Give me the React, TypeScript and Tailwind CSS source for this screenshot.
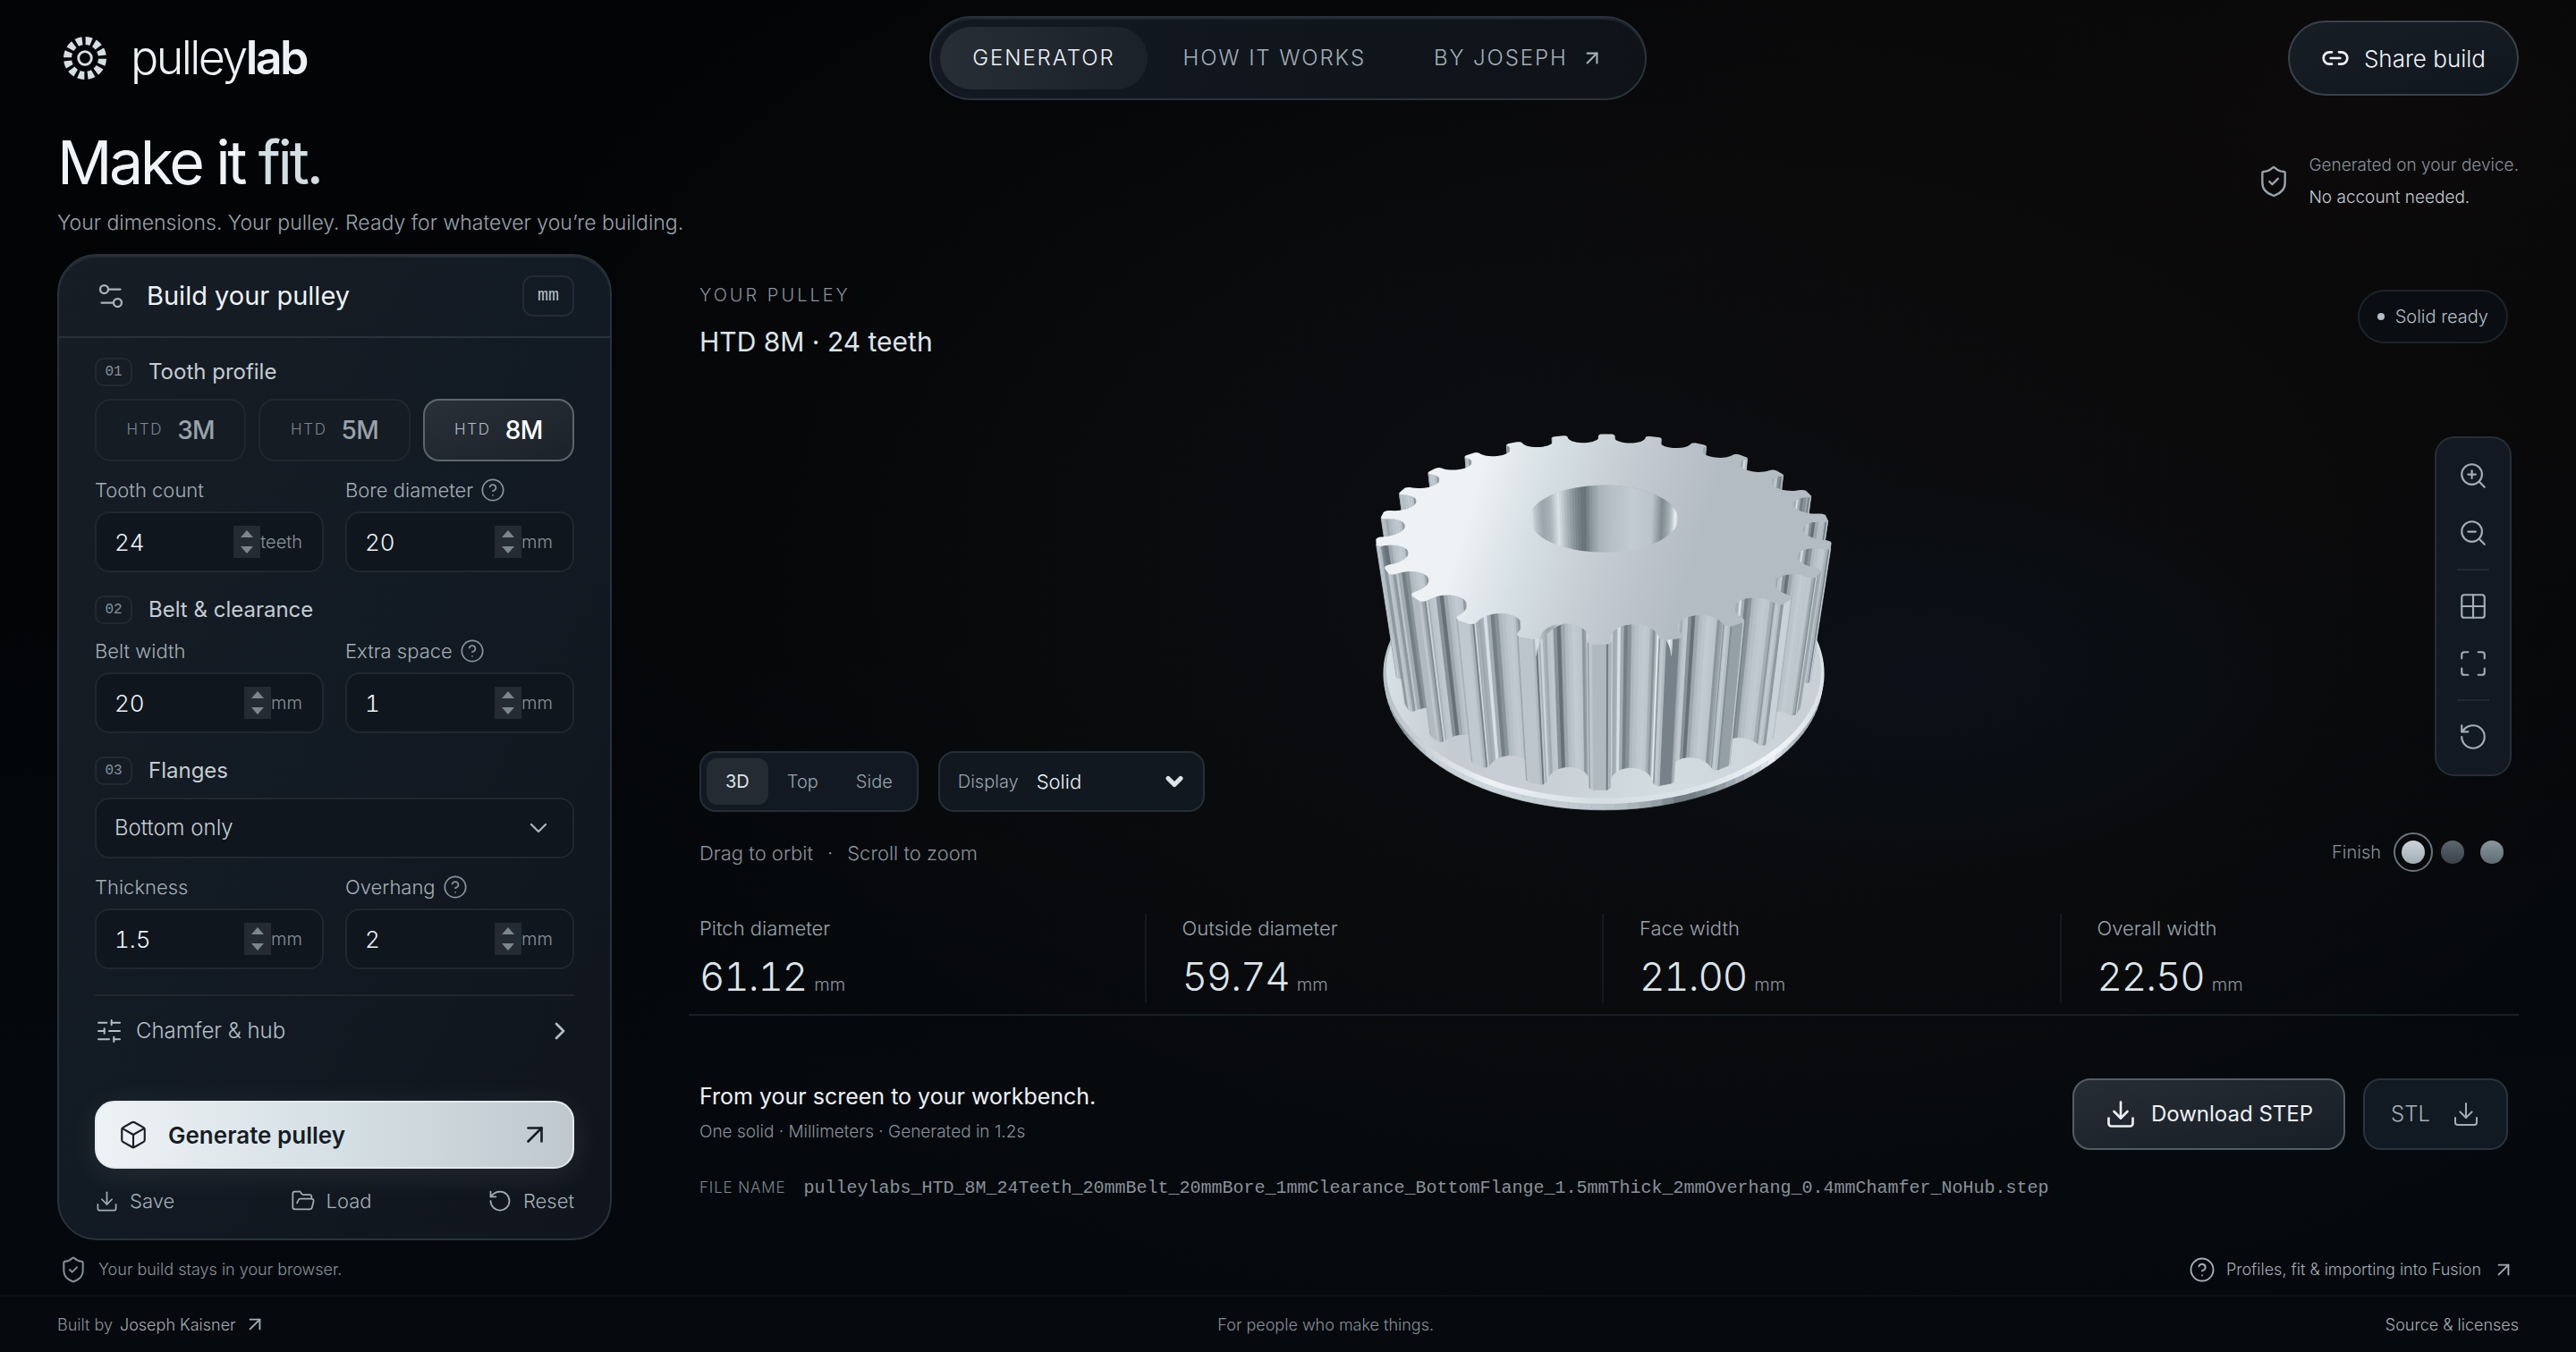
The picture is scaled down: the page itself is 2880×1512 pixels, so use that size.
import { useId, useState } from "react";
import type { ReactNode } from "react";
import {
  ArrowUpRight,
  Box,
  ChevronDown,
  ChevronRight,
  CircleHelp,
  Download,
  FolderOpen,
  Grid2x2,
  Link2,
  Maximize,
  RotateCcw,
  Settings2,
  ShieldCheck,
  SlidersHorizontal,
  ZoomIn,
  ZoomOut,
} from "lucide-react";

const FILE_NAME =
  "pulleylabs_HTD_8M_24Teeth_20mmBelt_20mmBore_1mmClearance_BottomFlange_1.5mmThick_2mmOverhang_0.4mmChamfer_NoHub.step";

const TEETH = 24;
const OUTSIDE_R = 29.87;
const FLANGE_R = 31.87;
const BORE_R = 10;
const TOP = 11.25;
const FLANGE_TOP = -9.75;
const BOTTOM = -11.25;

type Vec2 = [number, number];

// Camera looking down on the part
const CAM = { dist: 124, focal: 978, sin: 0.52, cos: 0.854, cx: 300, cy: 264 };

function project(x: number, y: number, z: number): Vec2 {
  const depth = CAM.dist - z * CAM.sin + y * CAM.cos;
  return [
    CAM.cx + (CAM.focal * x) / depth,
    CAM.cy - (CAM.focal * (z * CAM.cos + y * CAM.sin)) / depth,
  ];
}

// Brightness of a vertical wall by the heading of its normal, in degrees
const WALL: Vec2[] = [
  [-180, 0.8], [-90, 0.84], [-80, 1], [-68, 0.66], [-56, 0.42], [-44, 0.76], [-25, 0.8],
  [-8, 0.74], [3, 0.68], [11, 0.5], [17, 0.24], [24, 0.4], [32, 0.64], [41, 0.92],
  [50, 0.66], [60, 0.58], [71, 0.74], [82, 0.92], [90, 0.88], [180, 0.8],
];

const RAMP: [number, number, number, number][] = [
  [0, 60, 70, 79],
  [0.25, 100, 111, 119],
  [0.5, 139, 150, 157],
  [0.75, 186, 194, 201],
  [0.9, 213, 223, 228],
  [1, 240, 244, 247],
];

function wallShade(heading: number) {
  for (let i = 1; i < WALL.length; i++) {
    if (heading <= WALL[i][0]) {
      const [a, va] = WALL[i - 1];
      const [b, vb] = WALL[i];
      return va + ((vb - va) * (heading - a)) / (b - a);
    }
  }
  return 0.8;
}

function metal(value: number) {
  const v = Math.min(1, Math.max(0, value));
  for (let i = 1; i < RAMP.length; i++) {
    if (v <= RAMP[i][0]) {
      const lo = RAMP[i - 1];
      const hi = RAMP[i];
      const t = (v - lo[0]) / (hi[0] - lo[0]);
      const c = [1, 2, 3].map((k) => Math.round(lo[k] + (hi[k] - lo[k]) * t));
      return `rgb(${c.join(",")})`;
    }
  }
  return "rgb(240,244,247)";
}

function circle(r: number, n = 144): Vec2[] {
  return Array.from({ length: n }, (_, i) => {
    const a = (i / n) * Math.PI * 2;
    return [r * Math.cos(a), r * Math.sin(a)] as Vec2;
  });
}

// Tooth outline, counter-clockwise: rounded groove, shoulder fillets, land
function toothOutline(): Vec2[] {
  const pts: Vec2[] = [];
  const grooveR = 2.55;
  const fillet = 0.65;
  const center = OUTSIDE_R - 0.9;
  const step = (Math.PI * 2) / TEETH;
  const start = -Math.PI / 2 + step / 2 - 0.016;
  for (let i = 0; i < TEETH; i++) {
    const a = start + i * step;
    const local: Vec2[] = [];
    for (let k = 0; k <= 5; k++) {
      const t = (k / 5) * (Math.PI / 2);
      local.push([-(grooveR + fillet) + fillet * Math.sin(t), fillet * Math.cos(t) + 0.25]);
    }
    for (let k = 0; k <= 18; k++) {
      const t = Math.PI + (k / 18) * Math.PI;
      local.push([grooveR * Math.cos(t), grooveR * Math.sin(t)]);
    }
    for (let k = 0; k <= 5; k++) {
      const t = (k / 5) * (Math.PI / 2);
      local.push([grooveR + fillet - fillet * Math.cos(t), fillet * Math.sin(t) + 0.25]);
    }
    for (const [u, v] of local) {
      const r = center + v;
      pts.push([r * Math.cos(a) - u * Math.sin(a), r * Math.sin(a) + u * Math.cos(a)]);
    }
  }
  return pts;
}

const toPoints = (pts: Vec2[]) => pts.map((p) => `${p[0].toFixed(1)},${p[1].toFixed(1)}`).join(" ");
const toPath = (pts: Vec2[]) => "M" + pts.map((p) => `${p[0].toFixed(1)} ${p[1].toFixed(1)}`).join("L") + "Z";

// Extruded wall between two heights; inner walls show the side facing the axis
function walls(outline: Vec2[], zTop: number, zBottom: number, inner = false, lift = 0) {
  const quads: { points: string; fill: string; far: number }[] = [];
  outline.forEach((p, i) => {
    const q = outline[(i + 1) % outline.length];
    const quad = [project(p[0], p[1], zTop), project(q[0], q[1], zTop), project(q[0], q[1], zBottom), project(p[0], p[1], zBottom)];
    let area = 0;
    quad.forEach((c, k) => {
      const d = quad[(k + 1) % 4];
      area += c[0] * d[1] - d[0] * c[1];
    });
    if (inner ? area >= 0 : area <= 0) return;
    const sign = inner ? -1 : 1;
    const nx = (q[1] - p[1]) * sign;
    const ny = -(q[0] - p[0]) * sign;
    const heading = (Math.atan2(nx, -ny) * 180) / Math.PI;
    quads.push({ points: toPoints(quad), fill: metal(wallShade(heading) + lift), far: p[1] + q[1] });
  });
  return quads.sort((a, b) => b.far - a.far);
}

const outline = toothOutline();
const flatten = (pts: Vec2[], z: number) => pts.map(([x, y]) => project(x, y, z));

const toothWalls = walls(outline, TOP, FLANGE_TOP);
const boreWalls = walls(circle(BORE_R), TOP, BOTTOM, true);
const rimWalls = walls(circle(FLANGE_R - 0.1), FLANGE_TOP - 0.4, BOTTOM, false, 0.06);
const topFace = toPath(flatten(outline, TOP)) + toPath(flatten(circle(BORE_R), TOP));

function PulleyModel() {
  return (
    <svg viewBox="0 0 600 520" className="h-[520px] w-[600px]" role="img" aria-label="Pulley preview">
      <defs>
        <linearGradient id="face" gradientUnits="userSpaceOnUse" x1="120" y1="160" x2="398" y2="246">
          <stop offset="0" stopColor="#eef2f5" />
          <stop offset="0.12" stopColor="#edf1f4" />
          <stop offset="0.36" stopColor="#d6e0e4" />
          <stop offset="0.68" stopColor="#c3cad1" />
          <stop offset="1" stopColor="#b3bbc3" />
        </linearGradient>
        <linearGradient id="flange" gradientUnits="userSpaceOnUse" x1="50" y1="0" x2="540" y2="0">
          <stop offset="0" stopColor="#d9e2e6" />
          <stop offset="0.16" stopColor="#c4cbd2" />
          <stop offset="0.4" stopColor="#c9d1d7" />
          <stop offset="0.65" stopColor="#d3dde1" />
          <stop offset="1" stopColor="#c8d0d6" />
        </linearGradient>
        <linearGradient id="edge" gradientUnits="userSpaceOnUse" x1="50" y1="0" x2="540" y2="0">
          <stop offset="0" stopColor="#b4bec5" />
          <stop offset="0.25" stopColor="#eef2f5" />
          <stop offset="0.5" stopColor="#d5dfe3" />
          <stop offset="0.75" stopColor="#dbe4e8" />
          <stop offset="0.9" stopColor="#f2f5f7" />
          <stop offset="1" stopColor="#dbe3e7" />
        </linearGradient>
      </defs>
      {rimWalls.map((q, i) => (
        <polygon key={i} points={q.points} fill={q.fill} stroke={q.fill} strokeWidth="0.7" />
      ))}
      <polygon points={toPoints(flatten(circle(FLANGE_R), FLANGE_TOP - 0.4))} fill="url(#edge)" />
      <polygon points={toPoints(flatten(circle(FLANGE_R - 0.5), FLANGE_TOP))} fill="url(#flange)" />
      {toothWalls.map((q, i) => (
        <polygon key={i} points={q.points} fill={q.fill} stroke={q.fill} strokeWidth="0.7" />
      ))}
      <polygon points={toPoints(flatten(circle(BORE_R), TOP))} fill="#b9c1c8" />
      {boreWalls.map((q, i) => (
        <polygon key={i} points={q.points} fill={q.fill} stroke={q.fill} strokeWidth="0.7" />
      ))}
      <path d={topFace} fill="url(#face)" fillRule="evenodd" />
    </svg>
  );
}

function LogoMark() {
  const point = (r: number, deg: number) => {
    const a = (deg * Math.PI) / 180;
    return `${(25 + r * Math.sin(a)).toFixed(2)} ${(25 - r * Math.cos(a)).toFixed(2)}`;
  };
  return (
    <svg viewBox="0 0 50 50" className="size-[50px]" aria-hidden="true">
      {Array.from({ length: 12 }, (_, i) => {
        const a = 11.5 + i * 30;
        return (
          <path
            key={i}
            fill="#d5dfe3"
            d={`M${point(24, a - 10)}A24 24 0 0 1 ${point(24, a + 10)}L${point(15, a + 9)}A15 15 0 0 0 ${point(15, a - 9)}Z`}
          />
        );
      })}
      <circle cx="25" cy="25" r="7.3" fill="none" stroke="#d5dfe3" strokeWidth="2.8" />
    </svg>
  );
}

function NumberField({ label, unit, initial, help }: { label: string; unit: string; initial: string; help?: boolean }) {
  const id = useId();
  const [value, setValue] = useState(initial);
  const bump = (by: number) => setValue(String(Number(value) + by));

  return (
    <div className="flex flex-col gap-2">
      <div className="flex h-8 items-center gap-2">
        <label htmlFor={id} className="text-[22px] leading-8 font-light text-[#a3aeb5]">{label}</label>
        {help && (
          <button type="button" aria-label={`About ${label}`} className="text-[#87929a]">
            <CircleHelp size={28} strokeWidth={1.5} />
          </button>
        )}
      </div>
      <div className="flex h-[68px] items-center rounded-2xl border-2 border-[#20272f] bg-[#0f161d] pl-5 pr-[22px]">
        <input
          id={id}
          inputMode="decimal"
          value={value}
          onChange={(e) => setValue(e.target.value)}
          className="min-w-0 flex-1 bg-transparent text-[26px] font-light tabular-nums text-[#eef2f5] outline-none"
        />
        <div className="flex h-9 w-[30px] flex-col bg-[#242b33] text-[#7b868d]">
          <button type="button" aria-label={`Increase ${label}`} onClick={() => bump(1)} className="flex flex-1 items-center justify-center">
            <svg viewBox="0 0 14 8" className="h-2 w-3.5"><path d="M7 0l7 8H0z" fill="currentColor" /></svg>
          </button>
          <button type="button" aria-label={`Decrease ${label}`} onClick={() => bump(-1)} className="flex flex-1 items-center justify-center">
            <svg viewBox="0 0 14 8" className="h-2 w-3.5"><path d="M7 8l7-8H0z" fill="currentColor" /></svg>
          </button>
        </div>
        <span className="text-[20px] font-light text-[#87929a]">{unit}</span>
      </div>
    </div>
  );
}

function SectionTitle({ index, children }: { index: string; children: ReactNode }) {
  return (
    <div className="flex h-8 items-center gap-[18px]">
      <span className="flex h-8 w-[42px] items-center justify-center rounded-[10px] border-2 border-[#222931] font-['Liberation_Mono',monospace] text-[16px] text-[#87929a]">
        {index}
      </span>
      <h3 className="text-[24px] leading-8 text-[#c4ccd2]">{children}</h3>
    </div>
  );
}

function BuildPanel() {
  const [profile, setProfile] = useState("8M");

  return (
    <section className="flex flex-col rounded-[44px] border-2 border-[#29323a] bg-linear-to-br from-[#161d25] via-[#121a23] to-[#10151d] shadow-[inset_0_2px_0_#232c34]">
      <div className="flex h-[92px] items-center border-b-2 border-[#29313a] px-10">
        <Settings2 size={36} strokeWidth={1.5} className="text-[#a9b4bb]" />
        <h2 className="ml-[22px] flex-1 text-[29px] text-[#eef2f5]">Build your pulley</h2>
        <span className="flex h-[46px] w-[58px] items-center justify-center rounded-xl border-2 border-[#242b33] font-['Liberation_Mono',monospace] text-[20px] text-[#b4bec5]">
          mm
        </span>
      </div>

      <div className="flex flex-1 flex-col px-10 pt-[22px]">
        <SectionTitle index="01">Tooth profile</SectionTitle>
        <div className="mt-3.5 grid grid-cols-3 gap-3.5">
          {["3M", "5M", "8M"].map((size) => (
            <button
              key={size}
              type="button"
              aria-pressed={profile === size}
              onClick={() => setProfile(size)}
              className={`flex h-[70px] items-center justify-center gap-4 rounded-[18px] border-2 ${
                profile === size
                  ? "border-[#5b666e] bg-linear-to-br from-[#293038] to-[#1b222a] text-white"
                  : "border-[#20272f] bg-[#151c24] text-[#98a3aa]"
              }`}
            >
              <span className={`text-[17px] tracking-widest font-light ${profile === size ? "text-[#b4bec5]" : "text-[#7b868d]"}`}>HTD</span>
              <span className="text-[28px] font-medium tracking-tight">{size}</span>
            </button>
          ))}
        </div>
        <div className="mt-4 grid grid-cols-2 gap-6">
          <NumberField label="Tooth count" unit="teeth" initial="24" />
          <NumberField label="Bore diameter" unit="mm" initial="20" help />
        </div>

        <div className="mt-[26px]">
          <SectionTitle index="02">Belt &amp; clearance</SectionTitle>
        </div>
        <div className="mt-3.5 grid grid-cols-2 gap-6">
          <NumberField label="Belt width" unit="mm" initial="20" />
          <NumberField label="Extra space" unit="mm" initial="1" help />
        </div>

        <div className="mt-[26px]">
          <SectionTitle index="03">Flanges</SectionTitle>
        </div>
        <div className="relative mt-3.5">
          <select
            aria-label="Flanges"
            className="h-[68px] w-full appearance-none rounded-2xl border-2 border-[#20272f] bg-[#0f161d] px-5 text-[24px] font-light text-[#c4ccd2]"
          >
            <option>Bottom only</option>
            <option>Both sides</option>
            <option>None</option>
          </select>
          <ChevronDown size={32} strokeWidth={1.75} className="pointer-events-none absolute right-6 top-[18px] text-[#a9b4bb]" />
        </div>
        <div className="mt-4 grid grid-cols-2 gap-6">
          <NumberField label="Thickness" unit="mm" initial="1.5" />
          <NumberField label="Overhang" unit="mm" initial="2" help />
        </div>

        <button type="button" className="mt-7 flex h-20 items-center border-t-2 border-[#20272f] text-[24px] font-light text-[#b4bec5]">
          <SlidersHorizontal size={32} strokeWidth={1.5} />
          <span className="ml-3.5 flex-1 text-left">Chamfer &amp; hub</span>
          <ChevronRight size={32} strokeWidth={2} />
        </button>

        <button
          type="button"
          className="mt-auto flex h-[76px] items-center rounded-[22px] border-2 border-[#e3eaee] bg-linear-to-r from-[#eef2f5] via-[#d5e0e4] to-[#c0c8cf] px-6 text-[#161d25] shadow-[0_6px_32px_rgba(213,224,228,0.1)]"
        >
          <Box size={34} strokeWidth={1.5} />
          <span className="ml-[22px] flex-1 text-left text-[26px] font-semibold">Generate pulley</span>
          <ArrowUpRight size={36} strokeWidth={1.75} />
        </button>

        <div className="mb-[26px] mt-5 flex h-8 items-center justify-between text-[22px] font-light text-[#a3aeb5]">
          <button type="button" className="flex items-center gap-3"><Download size={27} strokeWidth={1.5} />Save</button>
          <button type="button" className="flex items-center gap-3"><FolderOpen size={28} strokeWidth={1.5} />Load</button>
          <button type="button" className="flex items-center gap-3"><RotateCcw size={28} strokeWidth={1.5} />Reset</button>
        </div>
      </div>
    </section>
  );
}

function Viewer() {
  const [view, setView] = useState("3D");
  const [finish, setFinish] = useState("Silver");

  const tools = [
    [
      { label: "Zoom in", icon: <ZoomIn size={34} strokeWidth={1.5} /> },
      { label: "Zoom out", icon: <ZoomOut size={34} strokeWidth={1.5} /> },
    ],
    [
      { label: "Toggle grid", icon: <Grid2x2 size={34} strokeWidth={1.5} /> },
      { label: "Fit to view", icon: <Maximize size={34} strokeWidth={1.5} /> },
    ],
    [{ label: "Reset view", icon: <RotateCcw size={34} strokeWidth={1.5} /> }],
  ];

  const finishes = [
    { name: "Silver", dot: "bg-linear-to-b from-[#ccd4da] to-[#a3adb4]" },
    { name: "Graphite", dot: "bg-linear-to-b from-[#5b666e] to-[#3a424a]" },
    { name: "Steel", dot: "bg-linear-to-b from-[#8b979e] to-[#5f6b72]" },
  ];

  return (
    <section className="relative flex h-[738px] flex-col justify-between pl-3 pr-2 pt-[30px] pb-12">
      {/* Canvas behind the controls */}
      <div className="absolute inset-0 flex items-center justify-center">
        <PulleyModel />
      </div>

      <div className="relative flex items-start justify-between">
        <div>
          <p className="text-[20px] leading-8 tracking-[0.15em] font-light text-[#87929a]">YOUR PULLEY</p>
          <h2 className="mt-4 text-[30px] leading-10 text-[#dde5e9]">HTD 8M · 24 teeth</h2>
        </div>
        <p className="mr-1 mt-2.5 flex h-[60px] items-center gap-3 rounded-full border-2 border-[#1c242b] bg-[#0a0e12] px-5 text-[20px] font-light text-[#b4bec5]">
          <span className="size-2 rounded-full bg-[#b4bec5]" />
          Solid ready
        </p>
      </div>

      <div className="relative flex items-end justify-between">
        <div className="mb-1">
          <div className="flex gap-[22px]">
            <div className="flex h-[68px] items-center rounded-[18px] border-2 border-[#262e36] bg-[#121922] p-1.5">
              {["3D", "Top", "Side"].map((name) => (
                <button
                  key={name}
                  type="button"
                  aria-pressed={view === name}
                  onClick={() => setView(name)}
                  className={`h-[52px] rounded-xl px-[21px] text-[20px] ${
                    view === name ? "bg-[#242b33] text-[#dde5e9]" : "font-light text-[#98a3aa]"
                  }`}
                >
                  {name}
                </button>
              ))}
            </div>
            <div className="relative flex h-[68px] w-[298px] items-center rounded-[18px] border-2 border-[#262e36] bg-[#111820] pl-5">
              <label htmlFor="display" className="text-[20px] font-light text-[#98a3aa]">Display</label>
              <select id="display" className="ml-5 h-full flex-1 appearance-none bg-transparent text-[22px] font-light text-[#eef2f5]">
                <option>Solid</option>
                <option>Wireframe</option>
              </select>
              <ChevronDown size={28} strokeWidth={4.5} className="pointer-events-none absolute right-[18px] top-[18px] text-[#dde5e9]" />
            </div>
          </div>
          <p className="mt-[30px] flex gap-4 text-[22px] leading-8 font-light text-[#87929a]">
            <span>Drag to orbit</span>
            <span>·</span>
            <span>Scroll to zoom</span>
          </p>
        </div>

        <div className="flex flex-col items-end">
          <div className="flex w-[86px] flex-col items-center rounded-[22px] border-2 border-[#262e36] bg-[#121922] py-[10px]">
            {tools.map((group, i) => (
              <div key={i} className={i > 0 ? "flex flex-col items-center" : ""}>
                {i > 0 && <div className="my-2 h-0.5 w-9 bg-[#222931]" />}
                {group.map((tool) => (
                  <button key={tool.label} type="button" aria-label={tool.label} className="flex size-16 items-center justify-center text-[#a3aeb5]">
                    {tool.icon}
                  </button>
                ))}
              </div>
            ))}
          </div>
          <div className="mt-16 flex h-[42px] items-center text-[20px] font-light text-[#87929a]">
            <span className="mr-3.5">Finish</span>
            {finishes.map((f) => (
              <button
                key={f.name}
                type="button"
                aria-label={f.name}
                aria-pressed={finish === f.name}
                onClick={() => setFinish(f.name)}
                className={`flex size-11 items-center justify-center rounded-full ${finish === f.name ? "border-2 border-[#68747c]" : ""}`}
              >
                <span className={`size-[26px] rounded-full ${f.dot}`} />
              </button>
            ))}
          </div>
        </div>
      </div>
    </section>
  );
}

const stats = [
  { label: "Pitch diameter", value: "61.12" },
  { label: "Outside diameter", value: "59.74" },
  { label: "Face width", value: "21.00" },
  { label: "Overall width", value: "22.50" },
];

function Results() {
  return (
    <>
      <dl className="grid grid-cols-4 border-b-2 border-[#182027] pb-3">
        {stats.map((s, i) => (
          <div key={s.label} className={`h-[100px] pt-1 ${i === 0 ? "pl-3" : "pl-10"} ${i < stats.length - 1 ? "border-r-2 border-[#141a1f]" : ""}`}>
            <dt className="text-[22px] leading-6 font-light text-[#98a3aa]">{s.label}</dt>
            <dd className="mt-4 flex items-baseline gap-2 text-[44px] leading-[52px] font-light text-[#dde5e9]">
              <span className="tabular-nums tracking-tight">{s.value}</span>
              <span className="text-[20px] text-[#87929a]">mm</span>
            </dd>
          </div>
        ))}
      </dl>

      <div className="flex items-start justify-between pl-3 pr-3 pt-[70px]">
        <div>
          <h2 className="text-[25px] leading-10 text-[#eef2f5]">From your screen to your workbench.</h2>
          <p className="mt-1 text-[19px] leading-8 font-light text-[#87929a]">One solid · Millimeters · Generated in 1.2s</p>
        </div>
        <div className="flex gap-5">
          <button
            type="button"
            className="flex h-20 items-center gap-4 rounded-[20px] border-2 border-[#525d65] bg-linear-to-br from-[#262d35] to-[#171e26] px-[34px] text-[24px] text-[#eef2f5]"
          >
            <Download size={36} strokeWidth={1.75} />
            Download STEP
          </button>
          <button
            type="button"
            className="flex h-20 items-center gap-6 rounded-[20px] border-2 border-[#2a333b] bg-[#111922] px-[29px] text-[24px] font-light text-[#a3aeb5]"
          >
            STL
            <Download size={32} strokeWidth={1.5} />
          </button>
        </div>
      </div>
      <p className="mt-[26px] flex items-baseline gap-5 pl-3 leading-8">
        <span className="text-[17px] tracking-wider font-light text-[#7b868d]">FILE NAME</span>
        <span className="font-['Liberation_Mono',monospace] text-[20px] text-[#87929a]">{FILE_NAME}</span>
      </p>
    </>
  );
}

export default function App() {
  return (
    <div className="flex min-h-screen flex-col bg-[#020406] bg-[radial-gradient(ellipse_14%_14%_at_75%_50%,#0b1119_0%,transparent_100%),radial-gradient(ellipse_40%_45%_at_92%_8%,#0c0a0a_0%,transparent_100%),radial-gradient(ellipse_50%_60%_at_66%_42%,#0c0e12_0%,#0a0b0d_45%,transparent_100%),linear-gradient(180deg,transparent_45%,#05090d_80%)] font-['Inter',sans-serif] text-white">
      <header className="grid grid-cols-[1fr_auto_1fr] items-center px-16 pt-[18px]">
        <a href="#" className="flex items-center gap-[26px] pl-1.5">
          <LogoMark />
          <span className="text-[52px] leading-[60px] font-light tracking-tighter text-[#eef2f5]">
            pulley<span className="font-semibold">lab</span>
          </span>
        </a>
        <nav className="flex h-[94px] items-center gap-1 rounded-full border-2 border-[#2a333b] bg-linear-to-r from-[#121922] to-[#0f1318] px-2.5 text-[24px] font-light tracking-[0.08em] text-[#a3aeb5] shadow-[inset_0_2px_0_#1d262d]">
          <a href="#generator" className="flex h-[70px] items-center rounded-full bg-linear-to-r from-[#272e36] to-[#1a2129] px-9 text-[#eef2f5]">
            GENERATOR
          </a>
          <a href="#how" className="flex h-[70px] items-center px-9">HOW IT WORKS</a>
          <a href="#joseph" className="flex h-[70px] items-center gap-3.5 px-9">
            BY JOSEPH
            <ArrowUpRight size={26} strokeWidth={2} />
          </a>
        </nav>
        <button
          type="button"
          className="flex h-[84px] items-center gap-4 justify-self-end rounded-full border-2 border-[#38424a] bg-linear-to-br from-[#171e26] to-[#10161e] px-[35px] text-[26px] font-light text-[#eef2f5]"
        >
          <Link2 size={32} strokeWidth={2} />
          Share build
        </button>
      </header>

      <div className="mt-[33px] flex items-center justify-between px-16">
        <div>
          <h1 className="text-[68px] leading-[72px] tracking-tighter text-[#f0f4f6]">
            Make it <span className="text-[#d3dee3]">fit.</span>
          </h1>
          <p className="mt-4 text-[23px] leading-8 font-light text-[#98a3aa]">
            Your dimensions. Your pulley. Ready for whatever you’re building.
          </p>
        </div>
        <div className="flex items-center gap-5 pb-1">
          <ShieldCheck size={38} strokeWidth={1.5} className="text-[#98a3aa]" />
          <p className="text-[19px] leading-9 font-light text-[#87929a]">
            Generated on your device.
            <br />
            <span className="text-[#c4ccd2]">No account needed.</span>
          </p>
        </div>
      </div>

      <main className="mt-[19px] grid flex-1 grid-cols-[620px_1fr] gap-[86px] px-16">
        <BuildPanel />
        <div>
          <Viewer />
          <Results />
        </div>
      </main>

      <div className="flex h-[61px] items-center justify-between px-16 pt-1 text-[18px] font-light text-[#87929a]">
        <p className="flex items-center gap-3 pl-0.5">
          <ShieldCheck size={32} strokeWidth={1.5} />
          Your build stays in your browser.
        </p>
        <a href="#help" className="flex items-center gap-3 pr-1 text-[#a3aeb5]">
          <CircleHelp size={30} strokeWidth={1.5} />
          Profiles, fit &amp; importing into Fusion
          <ArrowUpRight size={26} strokeWidth={1.75} />
        </a>
      </div>

      <footer className="flex h-16 items-center justify-between border-t-2 border-[#0c1115] bg-[#06090d] px-16 text-[18px] font-light text-[#87929a]">
        <p className="flex items-center gap-2">
          Built by
          <a href="#joseph" className="flex items-center gap-2 text-[#a3aeb5]">
            Joseph Kaisner
            <ArrowUpRight size={26} strokeWidth={1.75} />
          </a>
        </p>
        <p>For people who make things.</p>
        <a href="#source" className="text-[#a3aeb5]">Source &amp; licenses</a>
      </footer>
    </div>
  );
}
